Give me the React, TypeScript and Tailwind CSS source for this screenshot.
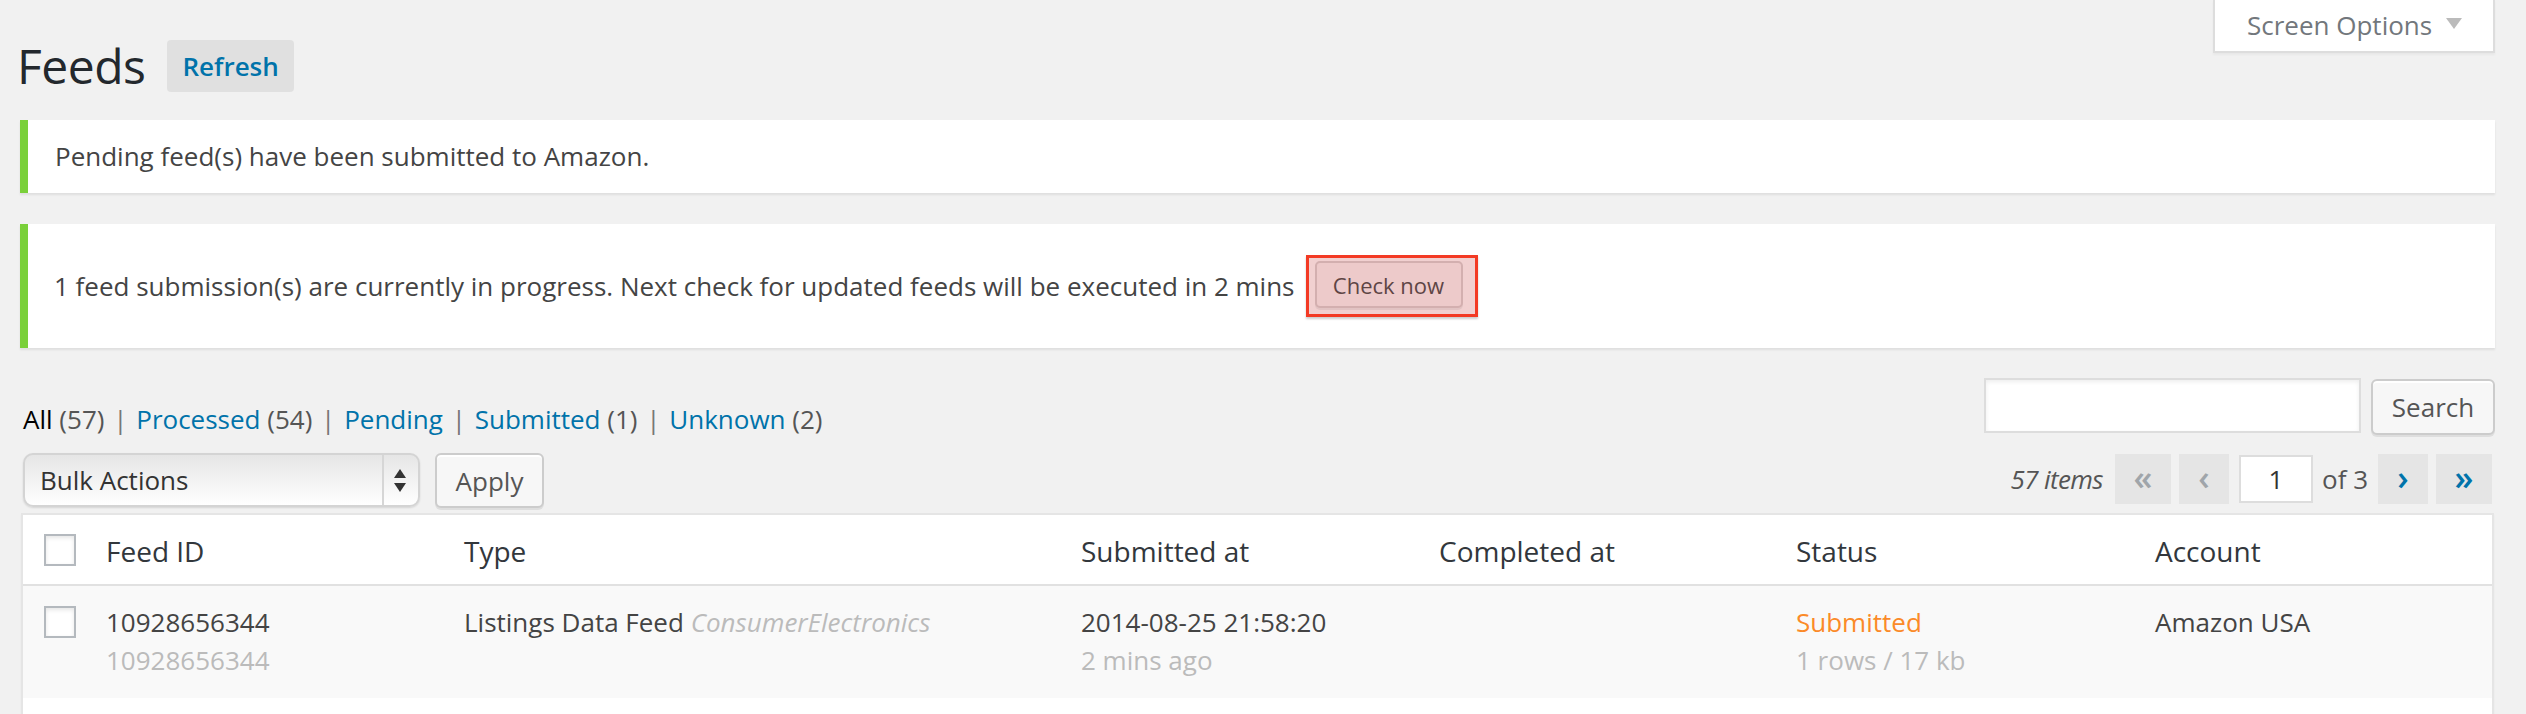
import React from "react";

const columns = ["Feed ID", "Type", "Submitted at", "Completed at", "Status", "Account"];

const grid = "grid grid-cols-[83px_358px_617px_358px_357px_359px_1fr]";

const Checkbox = () => (
  <div className="ml-[21px] h-[32px] w-[32px] border-2 border-[#b4b9be] bg-white shadow-[inset_0_2px_4px_rgba(0,0,0,0.1)]" />
);

const ScreenOptions = () => (
  <div className="absolute right-[31px] top-0 flex h-[53px] w-[282px] items-center border-x-2 border-b-2 border-[#ddd] bg-white pl-[32px] shadow-[0_2px_2px_rgba(0,0,0,0.04)]">
    <span className="mb-[2px] text-[26px] leading-none text-[#72777c]">Screen Options</span>
    <svg className="mb-[4px] ml-[14px]" width="16" height="11" viewBox="0 0 16 11">
      <path d="M0 0h16L8 11z" fill="#bbb" />
    </svg>
  </div>
);

const FilterLinks = () => {
  const items = [
    { label: "All", count: "(57)", current: true },
    { label: "Processed", count: "(54)" },
    { label: "Pending", count: "" },
    { label: "Submitted", count: "(1)" },
    { label: "Unknown", count: "(2)" },
  ];
  return (
    <div className="ml-[3px] mt-[22px] whitespace-pre text-[26px] leading-[39px] text-[#777]">
      {items.map((item, i) => (
        <span key={item.label}>
          <span className={item.current ? "text-black" : "text-[#0073aa]"}>{item.label}</span>
          {item.count && <span className="text-[#555]"> {item.count}</span>}
          {i < items.length - 1 && (
            <>
              {" "}
              <span className="mx-[2px]">|</span>{" "}
            </>
          )}
        </span>
      ))}
    </div>
  );
};

const WpButton = ({ children, className = "" }: { children: React.ReactNode; className?: string }) => (
  <button
    className={`flex items-center justify-center rounded-[6px] border-2 border-[#ccc] bg-[#f7f7f7] text-[26px] leading-none text-[#555] shadow-[inset_0_2px_0_#fff,0_2px_0_rgba(0,0,0,0.08)] ${className}`}
  >
    {children}
  </button>
);

const PageButton = ({ children, active }: { children: React.ReactNode; active?: boolean }) => (
  <div
    className={`flex h-[50px] items-center justify-center bg-[#e5e5e5] pb-[4px] text-[34px] font-semibold leading-none ${
      active ? "text-[#0073aa]" : "text-[#a0a5aa]"
    }`}
  >
    {children}
  </div>
);

export default function App() {
  return (
    <div className="relative h-screen overflow-hidden bg-[#f1f1f1] font-['Open_Sans',sans-serif] text-[#444]">
      <ScreenOptions />
      <div className="pl-[20px] pr-[31px] pt-[40px]">
        <div className="flex h-[52px] items-center">
          <h1 className="-ml-[3px] text-[48px] font-normal leading-[52px] tracking-[-0.5px] text-[#23282d]">Feeds</h1>
          <button className="ml-[22px] h-[52px] rounded-[4px] bg-[#e0e0e0] px-[15px] text-[26px] font-semibold leading-none text-[#0073aa]">
            Refresh
          </button>
        </div>

        <div className="mt-[28px] border-l-[8px] border-[#7ad03a] bg-white py-[17px] pl-[27px] shadow-[0_2px_2px_rgba(0,0,0,0.08)]">
          <p className="text-[26px] leading-[39px]">Pending feed(s) have been submitted to Amazon.</p>
        </div>

        <div className="mt-[31px] flex h-[124px] items-center border-l-[8px] border-[#7ad03a] bg-white pl-[26px] shadow-[0_2px_2px_rgba(0,0,0,0.08)]">
          <p className="text-[26px] leading-[39px]">
            1 feed submission(s) are currently in progress. Next check for updated feeds will be executed in 2 mins
          </p>
          <div className="ml-[11px] border-[3px] border-[#f33a24] bg-[#f1d0d0] pb-[6px] pl-[6px] pr-[12px] pt-[3px] shadow-[0_2px_2px_rgba(0,0,0,0.2)]">
            <div className="flex h-[47px] w-[148px] items-center justify-center rounded-[5px] border-2 border-[#d3afaf] bg-[#edcaca] text-[22px] leading-none text-[#5e4545] shadow-[0_2px_0_rgba(0,0,0,0.06)]">
              Check now
            </div>
          </div>
        </div>

        <div className="mt-[30px] flex h-[57px] items-start justify-between">
          <FilterLinks />
          <div className="flex items-start">
            <div className="h-[55px] w-[377px] border-2 border-[#ddd] bg-white shadow-[inset_0_2px_4px_rgba(0,0,0,0.07)]" />
            <WpButton className="ml-[10px] mt-[1px] h-[56px] w-[124px]">Search</WpButton>
          </div>
        </div>

        <div className="mt-[18px] flex h-[55px] items-start justify-between">
          <div className="flex items-start">
            <div className="ml-[3px] flex h-[54px] w-[397px] items-center rounded-[10px] border-2 border-[#d4d4d4] bg-linear-to-b from-[#e6e6e6] to-white shadow-[0_1px_2px_rgba(0,0,0,0.12)]">
              <span className="flex-1 pl-[15px] text-[26px] leading-none text-[#333]">Bulk Actions</span>
              <div className="flex h-full w-[36px] flex-col items-center justify-center gap-[5px] border-l-2 border-[#d6d6d6] pr-[2px]">
                <svg width="12" height="9" viewBox="0 0 12 9">
                  <path d="M6 0L12 9H0z" fill="#333" />
                </svg>
                <svg width="12" height="9" viewBox="0 0 12 9">
                  <path d="M0 0h12L6 9z" fill="#333" />
                </svg>
              </div>
            </div>
            <WpButton className="ml-[15px] h-[55px] w-[109px]">Apply</WpButton>
          </div>
          <div className="mr-[3px] mt-[1px] flex items-center">
            <span className="mr-[12px] text-[26px] italic leading-none tracking-[-0.6px] text-[#555]">57 items</span>
            <div className="w-[56px]">
              <PageButton>«</PageButton>
            </div>
            <div className="ml-[8px] w-[50px]">
              <PageButton>‹</PageButton>
            </div>
            <div className="ml-[10px] flex h-[48px] w-[74px] items-center justify-center border-2 border-[#ddd] bg-white text-[26px] leading-none text-[#333]">
              1
            </div>
            <span className="ml-[9px] text-[26px] leading-none text-[#555]">of 3</span>
            <div className="ml-[10px] w-[50px]">
              <PageButton active>›</PageButton>
            </div>
            <div className="ml-[8px] w-[56px]">
              <PageButton active>»</PageButton>
            </div>
          </div>
        </div>

        <div className="ml-[1px] mr-[1px] mt-[5px] border-2 border-[#e5e5e5] bg-white shadow-[0_2px_2px_rgba(0,0,0,0.04)]">
          <div className={`${grid} h-[71px] items-center border-b-2 border-[#e1e1e1] text-[28px] leading-[39px] text-[#32373c]`}>
            <Checkbox />
            {columns.map((c) => (
              <div key={c} className="pt-[3px]">
                {c}
              </div>
            ))}
          </div>
          <div className={`${grid} h-[112px] bg-[#f9f9f9] text-[26px] leading-[38px]`}>
            <div className="pt-[20px]">
              <Checkbox />
            </div>
            <div className="pt-[17px]">
              <div>10928656344</div>
              <div className="text-[#bbb]">10928656344</div>
            </div>
            <div className="pt-[17px]">
              Listings Data Feed <span className="italic text-[#bbb]">ConsumerElectronics</span>
            </div>
            <div className="pt-[17px]">
              <div>2014-08-25 21:58:20</div>
              <div className="text-[#bbb]">2 mins ago</div>
            </div>
            <div className="pt-[17px]" />
            <div className="pt-[17px]">
              <div className="text-[#fb8a28]">Submitted</div>
              <div className="text-[#bbb]">1 rows / 17 kb</div>
            </div>
            <div className="pt-[17px]">Amazon USA</div>
          </div>
          <div className="h-[60px] bg-white" />
        </div>
      </div>
    </div>
  );
}
